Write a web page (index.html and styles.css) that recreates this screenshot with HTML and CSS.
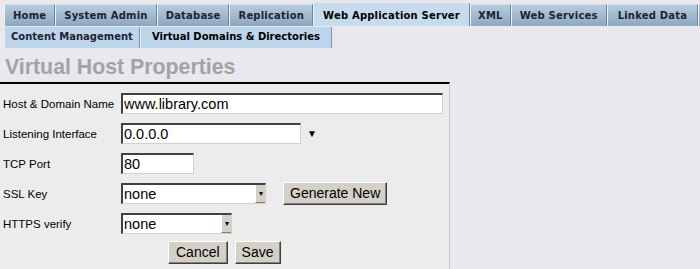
FILE: index.html
```html
<!DOCTYPE html>
<html lang="en">
<head>
  <meta charset="UTF-8" />
  <title>Virtual Host Properties</title>
  <link rel="stylesheet" href="styles.css">
</head>
<body>
  <div class="tabs">
    <a class="tab">Home</a>
    <a class="tab">System Admin</a>
    <a class="tab">Database</a>
    <a class="tab">Replication</a>
    <a class="tab active">Web Application Server</a>
    <a class="tab xml">XML</a>
    <a class="tab">Web Services</a>
    <a class="tab wide-pad">Linked Data</a>
    <a class="tab more"></a>
  </div>
  <div class="subtabs">
    <a class="subtab">Content Management</a>
    <a class="subtab active">Virtual Domains &amp; Directories</a>
  </div>

  <h1>Virtual Host Properties</h1>

  <form class="panel">
    <div class="row">
      <label for="host">Host &amp; Domain Name</label>
      <input type="text" id="host" class="field wide" value="www.library.com">
    </div>
    <div class="row">
      <label for="iface">Listening Interface</label>
      <input type="text" id="iface" class="field mid" value="0.0.0.0">
      <span class="arrow">&#9660;</span>
    </div>
    <div class="row">
      <label for="port">TCP Port</label>
      <input type="text" id="port" class="field short" value="80">
    </div>
    <div class="row">
      <label for="ssl">SSL Key</label>
      <span class="select ssl"><span class="val">none</span><span class="drop">&#9662;</span></span>
      <button type="button" class="btn gen">Generate New</button>
    </div>
    <div class="row">
      <label for="verify">HTTPS verify</label>
      <span class="select verify"><span class="val">none</span><span class="drop">&#9662;</span></span>
    </div>
    <div class="actions">
      <button type="button" class="btn cancel">Cancel</button>
      <button type="button" class="btn">Save</button>
    </div>
  </form>
</body>
</html>
```

FILE: styles.css
```css
body{margin:0;background:#e9e8ee;font-family:"Liberation Sans",Arial,sans-serif;overflow:hidden}
.tabs{display:flex;padding:4px 0 0 4px;white-space:nowrap}
.tab{font:bold 10px "DejaVu Sans",Verdana,sans-serif;letter-spacing:.2px;color:#223;box-sizing:border-box;padding:5px 8px 4px;height:22px;background:linear-gradient(#b6cce0,#8ca8bf);border-left:1px solid #eef2f6;border-right:1px solid #6e8497;border-top:1px solid #d0dbe5;flex:none}
.tab.xml{padding:5px 7px 4px}
.tab.wide-pad{padding:5px 10px 4px}
.tab.more{width:20px}
.tab.active{background:#c6dcee;color:#000;padding:6px 9px 4px;margin-top:-1px;height:23px}
.subtabs{display:inline-flex;margin-left:4px;background:#bcd5ea}
.subtab{font:bold 10px "DejaVu Sans",Verdana,sans-serif;color:#223;box-sizing:border-box;padding:4px 6px;height:21px;border-right:1px solid #7d93a6;border-left:1px solid #e6eef5}
.subtab.active{color:#000;padding:4px 11px}
h1{margin:7px 0 0 5px;font:bold 21.3px "Liberation Sans",Arial,sans-serif;color:#a3a3a3;height:27px}
.panel{width:450px;background:#ececec;border-top:2px solid #000;border-right:1px solid #c8c8c8;margin:0;padding:9px 0 0 0;box-sizing:border-box;height:190px}
.row{display:flex;align-items:center;height:21px;margin-bottom:9px}
label{width:121px;padding-left:3px;box-sizing:border-box;font-size:11.5px;color:#000;flex:none}
.field{height:21px;box-sizing:border-box;border:1px solid #ccc;border-top:2px solid #404040;border-left:2px solid #404040;border-bottom-color:#d4d0c8;border-right-color:#d4d0c8;background:#fff;font:14.5px "Liberation Sans",Arial,sans-serif;padding:0 1px;margin:0}
.wide{width:322px}
.mid{width:180px}
.short{width:73px}
.arrow{font-size:10px;margin-left:6px;color:#000}
.select{display:flex;height:21px;box-sizing:border-box;border-top:2px solid #404040;border-left:2px solid #404040;border-bottom:1px solid #d4d0c8;border-right:1px solid #d4d0c8;background:#fff;font-size:14.5px}
.select .val{flex:1;padding-left:1px;line-height:18px}
.select .drop{width:9px;background:#d4d0c8;border-left:1px solid #fff;border-bottom:1px solid #808080;font-size:8px;text-align:center;line-height:18px}
.ssl{width:145px}
.verify{width:111px}
.btn{font:14px "Liberation Sans",Arial,sans-serif;background:#d4d0c8;border:1px solid;border-color:#fff #404040 #404040 #fff;box-shadow:inset -1px -1px #808080;padding:1px 6px 2px;height:23px;color:#000}
.cancel{padding:1px 7px 2px}
.gen{margin-left:17px}
.actions{display:flex;gap:7px;padding-left:168px;margin-top:-2px}
```
